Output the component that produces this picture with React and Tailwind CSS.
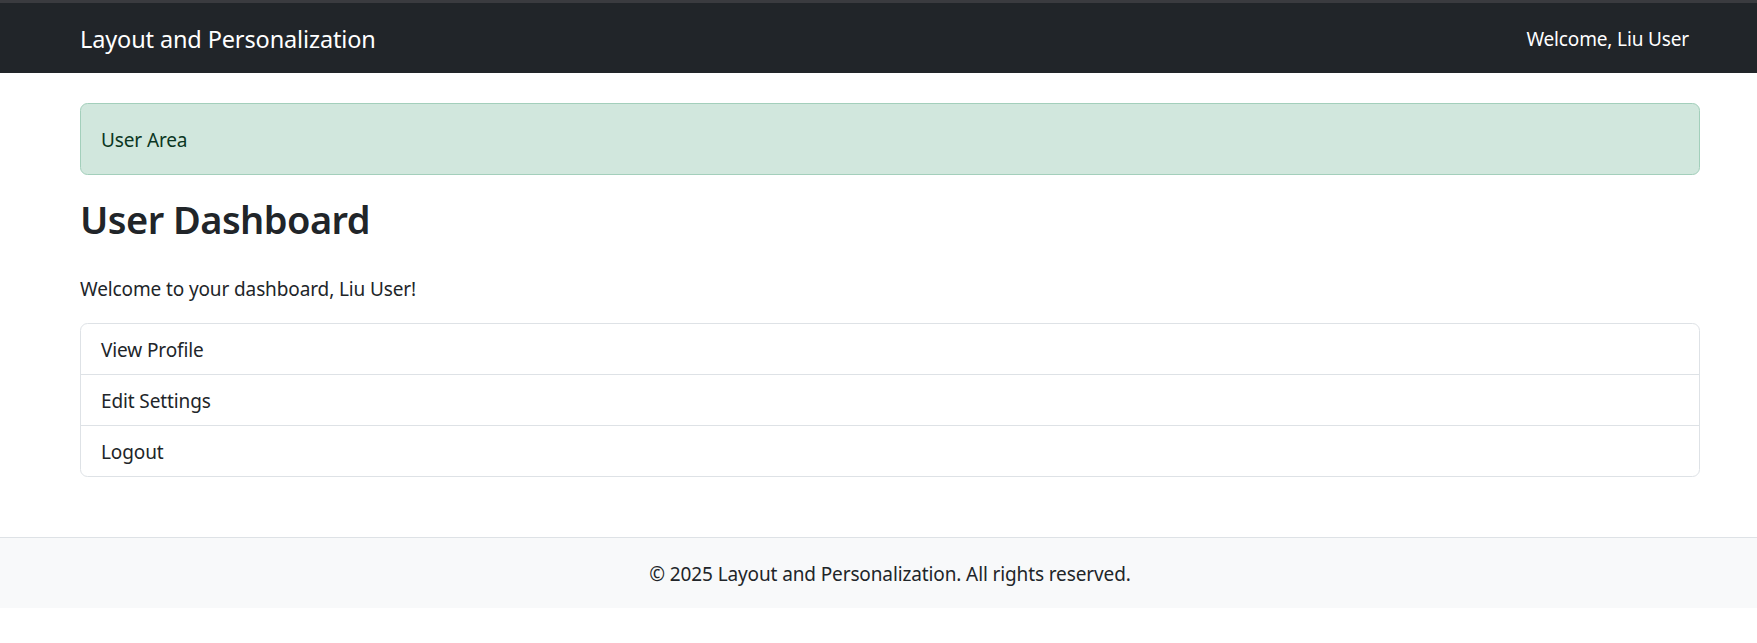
export default function App() {
  const items = ["View Profile", "Edit Settings", "Logout"];
  return (
    <div className="min-h-screen bg-white font-['Noto_Sans',sans-serif] text-[#212529]">
      <div className="h-[3px] bg-[#3a3b3f]" />
      <nav className="h-[70px] bg-[#212529] flex items-center">
        <div className="ml-[65px] w-[1650px] px-[15px] pt-[2px] flex items-center justify-between">
          <span className="text-[23.5px] tracking-[-0.13px] leading-[37px] text-white">Layout and Personalization</span>
          <span className="text-[19px] tracking-[-0.15px] leading-[30px] text-white mr-[11px]">Welcome, Liu User</span>
        </div>
      </nav>
      <main className="ml-[65px] w-[1650px] px-[15px] pt-[30px] pb-[60px] text-[19px] tracking-[-0.12px]">
        <div className="rounded-[7.5px] border border-[#a3cfbb] bg-[#d1e7dd] px-[20px] pt-[21px] pb-[19px] leading-[30px] text-[#0a3622] mb-[20px]">
          User Area
        </div>
        <h2 className="text-[38px] tracking-[-0.55px] leading-[48px] font-semibold mb-[30px]">User Dashboard</h2>
        <p className="leading-[30px] pt-[1px] mb-[19px]">Welcome to your dashboard, Liu User!</p>
        <div className="rounded-[7.5px] border border-[#dee2e6] flex flex-col">
          {items.map((t, i) => (
            <div
              key={t}
              className={
                i === 0
                  ? "px-[20px] pt-[11px] pb-[9px] leading-[30px]"
                  : "px-[20px] pt-[11px] pb-[9px] leading-[30px] border-t border-[#dee2e6]"
              }
            >
              {t}
            </div>
          ))}
        </div>
      </main>
      <footer className="border-t border-[#dee2e6] bg-[#f8f9fa] pt-[21px] pb-[19px]">
        <div className="ml-[65px] w-[1650px] px-[15px] text-center text-[19px] tracking-[-0.12px] leading-[30px]">
          © 2025 Layout and Personalization. All rights reserved.
        </div>
      </footer>
    </div>
  );
}
